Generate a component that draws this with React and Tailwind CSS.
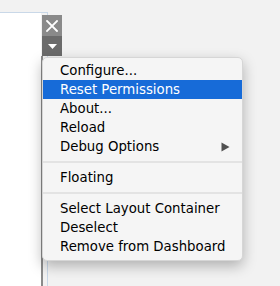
import React from "react";

const items = [
  { label: "Configure..." },
  { label: "Reset Permissions", active: true },
  { label: "About..." },
  { label: "Reload" },
  { label: "Debug Options", sub: true },
  { sep: true },
  { label: "Floating" },
  { sep: true },
  { label: "Select Layout Container" },
  { label: "Deselect" },
  { label: "Remove from Dashboard" },
];

const MenuRow = ({ item }) => {
  if (item.sep) {
    return (
      <div className="h-[12px] flex items-center">
        <div className="w-full h-[2px] bg-[#e3e3e3]" />
      </div>
    );
  }
  return (
    <div
      className={`h-[19px] leading-[19px] pl-[17px] pr-[12px] flex items-center justify-between ${
        item.active ? "bg-[#176bd8] text-white" : "text-black"
      }`}
    >
      <span>{item.label}</span>
      {item.sub && (
        <svg width="9" height="10" viewBox="0 0 9 10">
          <path d="M0.5 0.5 L8.5 5 L0.5 9.5 Z" fill="#505050" />
        </svg>
      )}
    </div>
  );
};

const App = () => {
  return (
    <div className="relative w-[280px] h-[286px] overflow-hidden bg-[#f2f2f2] font-['DejaVu_Sans',sans-serif]">
      {/* dashboard zone behind */}
      <div className="pt-[12px] h-full">
        <div className="w-[48px] h-full border-t border-r border-[#c9d8e8] flex">
          <div className="w-[41px] bg-white" />
          <div className="w-[2px] mt-[43px] bg-[#8b8b8b]" />
          <div className="flex-1" />
        </div>
      </div>

      {/* zone toolbar */}
      <div className="absolute left-[42px] top-[15px] w-[20px] flex flex-col">
        <div className="h-[21px] bg-[#8a8a8a] flex items-center justify-center">
          <svg width="12" height="12" viewBox="0 0 12 12">
            <path
              d="M1 1 L11 11 M11 1 L1 11"
              stroke="white"
              strokeWidth="1.8"
              strokeLinecap="square"
            />
          </svg>
        </div>
        <div className="h-[20px] bg-[#6b6b6b] flex items-center justify-center">
          <svg width="9" height="5" viewBox="0 0 9 5">
            <path d="M0 0 L9 0 L4.5 5 Z" fill="white" />
          </svg>
        </div>
      </div>

      {/* context menu */}
      <div className="absolute left-[42px] top-[57px] w-[201px] pt-[3px] pb-[4px] rounded-[5px] bg-[#f5f5f5] border border-[#d6d6d6] shadow-[0_5px_14px_rgba(0,0,0,0.28)] text-[13.3px] overflow-hidden">
        {items.map((item, i) => (
          <MenuRow key={i} item={item} />
        ))}
      </div>
    </div>
  );
};

export default App;
